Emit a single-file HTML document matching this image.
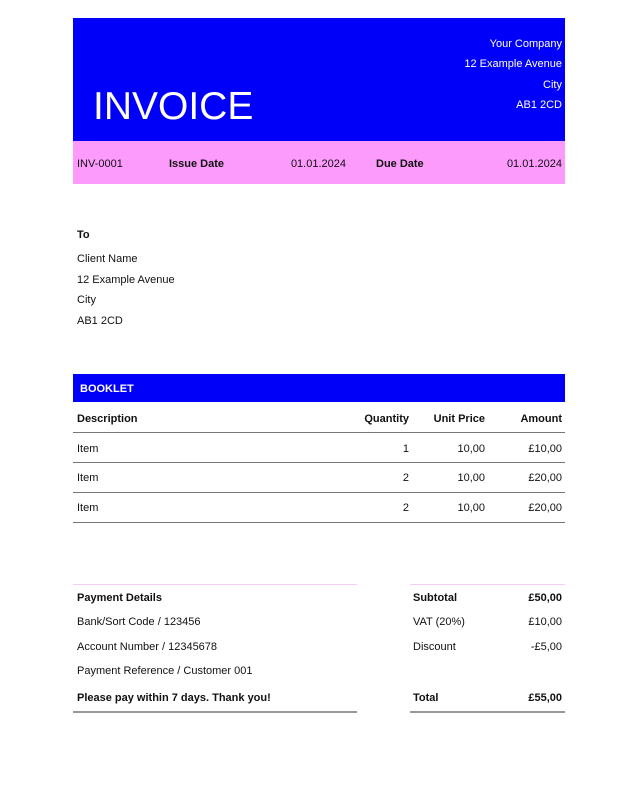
<!DOCTYPE html>
<html><head><style>
body{margin:0;width:635px;height:794px;background:#fff;font-family:"Liberation Sans",sans-serif;font-size:11px;color:#111;position:relative;overflow:hidden}
.a{position:absolute;white-space:nowrap}
.r{text-align:right}
.b{font-weight:bold}
.w{color:#fff}
.ln{position:absolute;height:1px;background:#777}
</style></head><body>
<div class="a" style="left:73px;top:18px;width:492px;height:123px;background:#0000fa"></div>
<div class="a" style="left:73px;top:141px;width:492px;height:43px;background:#fd9bfd"></div>
<div class="a w" style="left:93px;top:85px;font-size:39px;line-height:44px">INVOICE</div>
<div class="a w r" style="right:73px;top:34px;line-height:20.3px">Your Company<br>12 Example Avenue<br>City<br>AB1 2CD</div>
<div class="a" style="left:77px;top:158px">INV-0001</div>
<div class="a b" style="left:169px;top:158px">Issue Date</div>
<div class="a r" style="right:289px;top:158px">01.01.2024</div>
<div class="a b" style="left:376px;top:158px">Due Date</div>
<div class="a r" style="right:73px;top:158px">01.01.2024</div>

<div class="a b" style="left:77px;top:229px">To</div>
<div class="a" style="left:77px;top:249px;line-height:20.5px">Client Name<br>12 Example Avenue<br>City<br>AB1 2CD</div>

<div class="a" style="left:73px;top:374px;width:492px;height:28px;background:#0000fa"></div>
<div class="a b w" style="left:80px;top:383px">BOOKLET</div>
<div class="a b" style="left:77px;top:413px">Description</div>
<div class="a b r" style="right:226px;top:413px">Quantity</div>
<div class="a b r" style="right:150px;top:413px">Unit Price</div>
<div class="a b r" style="right:73px;top:413px">Amount</div>
<div class="ln" style="left:73px;width:492px;top:432px"></div>
<div class="a" style="left:77px;top:443px">Item</div><div class="a r" style="right:226px;top:443px">1</div><div class="a r" style="right:150px;top:443px">10,00</div><div class="a r" style="right:73px;top:443px">£10,00</div>
<div class="ln" style="left:73px;width:492px;top:462px"></div>
<div class="a" style="left:77px;top:472px">Item</div><div class="a r" style="right:226px;top:472px">2</div><div class="a r" style="right:150px;top:472px">10,00</div><div class="a r" style="right:73px;top:472px">£20,00</div>
<div class="ln" style="left:73px;width:492px;top:492px"></div>
<div class="a" style="left:77px;top:502px">Item</div><div class="a r" style="right:226px;top:502px">2</div><div class="a r" style="right:150px;top:502px">10,00</div><div class="a r" style="right:73px;top:502px">£20,00</div>
<div class="ln" style="left:73px;width:492px;top:522px"></div>

<div class="a" style="left:73px;top:584px;width:284px;height:1px;background:#f5cdf5"></div>
<div class="a" style="left:410px;top:584px;width:155px;height:1px;background:#f5cdf5"></div>
<div class="a b" style="left:77px;top:592px">Payment Details</div>
<div class="a" style="left:77px;top:616px">Bank/Sort Code / 123456</div>
<div class="a" style="left:77px;top:641px">Account Number / 12345678</div>
<div class="a" style="left:77px;top:665px">Payment Reference / Customer 001</div>
<div class="a b" style="left:77px;top:692px">Please pay within 7 days. Thank you!</div>
<div class="a b" style="left:413px;top:592px">Subtotal</div><div class="a b r" style="right:73px;top:592px">£50,00</div>
<div class="a" style="left:413px;top:616px">VAT (20%)</div><div class="a r" style="right:73px;top:616px">£10,00</div>
<div class="a" style="left:413px;top:641px">Discount</div><div class="a r" style="right:73px;top:641px">-£5,00</div>
<div class="a b" style="left:413px;top:692px">Total</div><div class="a b r" style="right:73px;top:692px">£55,00</div>
<div class="a" style="left:73px;top:711px;width:284px;height:2px;background:#999"></div>
<div class="a" style="left:410px;top:711px;width:155px;height:2px;background:#999"></div>
</body></html>
